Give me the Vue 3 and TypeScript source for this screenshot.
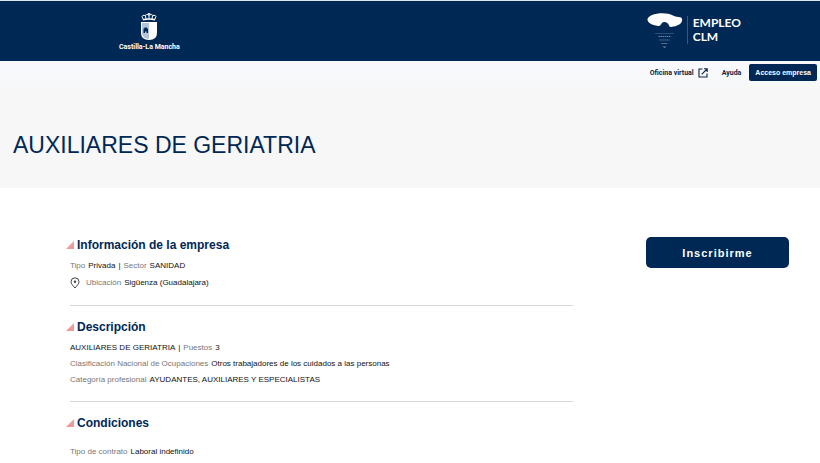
<script setup lang="ts">
interface Field {
  label?: string
  value: string
  pin?: boolean
}

interface Section {
  title: string
  rows: Field[][]
  spaced?: boolean
}

const sections: Section[] = [
  {
    title: 'Información de la empresa',
    rows: [
      [{ label: 'Tipo', value: 'Privada' }, { label: 'Sector', value: 'SANIDAD' }],
      [{ label: 'Ubicación', value: 'Sigüenza (Guadalajara)', pin: true }],
    ],
  },
  {
    title: 'Descripción',
    rows: [
      [{ value: 'AUXILIARES DE GERIATRIA' }, { label: 'Puestos', value: '3' }],
      [{ label: 'Clasificación Nacional de Ocupaciones', value: 'Otros trabajadores de los cuidados a las personas' }],
      [{ label: 'Categoría profesional', value: 'AYUDANTES, AUXILIARES Y ESPECIALISTAS' }],
    ],
  },
  {
    title: 'Condiciones',
    spaced: true,
    rows: [[{ label: 'Tipo de contrato', value: 'Laboral indefinido' }]],
  },
]
</script>

<template>
  <div class="page">
    <header class="brand-bar">
      <a class="region" href="#">
        <svg class="crest" viewBox="0 0 18 29" aria-hidden="true">
          <g fill="none" stroke="#fff" stroke-width="1">
            <path d="M3.500 8 L2 4.500 Q2.500 2.600 5 3.500 Q6.500 1.800 9 3 Q11.500 1.800 13 3.500 Q15.500 2.600 16 4.500 L14.500 8" />
            <path d="M5.500 4 L6 7 M9 1 V7 M12.500 4 L12 7 M7.700 1.800 H10.300" />
            <path d="M3 7.700 Q9 6.200 15 7.700" stroke-width="1.400" />
          </g>
          <path d="M1 10 H17 V21 Q17 28 9 28 Q1 28 1 21 Z" fill="#fff" />
          <path d="M2 11 H9 V27 Q2 26.500 2 21 Z" fill="#b4c3d6" />
          <path d="M3.500 21 V16.500 H4.500 V15.500 H7 V16.500 H8 V21 H6.500 V19.500 H5 V21 Z" fill="#002855" />
        </svg>
        <span class="region-name">Castilla-La Mancha</span>
      </a>
      <a class="empleo" href="#">
        <svg class="empleo-mark" viewBox="0 0 36 38" aria-hidden="true">
          <path d="M5 3 C11 .5 21 .5 26 3.500 C28 5 31 4.500 34 5.500 C36.500 7.500 35 12 30 13.500 C26 15.200 23 15.200 22.500 14.500 C21.500 11 19 9.800 17 10 C14 10.500 14 14 12 14 C6 13.500 0 11 .5 7 C1 5 3 4 5 3 Z" fill="#fff" />
          <g stroke="#6f86a3" fill="none">
            <path d="M8 21.500 H27" stroke-width=".4" />
            <path d="M11.500 24.500 H23.500" stroke-dasharray="1.500 .6" stroke-width="1.200" />
            <path d="M12.500 28 H22.500" stroke-dasharray="1.200 .7" stroke-width="1.200" />
            <path d="M14.500 31.500 H20.500" stroke-dasharray="1.400 .5" stroke-width="1.200" />
            <path d="M16.500 34 L17.500 36 L18.500 34" stroke-width=".9" />
          </g>
        </svg>
        <span class="empleo-name">
          <span>EMPLEO</span>
          <span>CLM</span>
        </span>
      </a>
    </header>

    <div class="hero">
      <nav class="links">
        <a class="link" href="#">
          Oficina virtual
          <svg class="external" viewBox="0 0 10 10" aria-hidden="true">
            <path d="M4.500 1 H1 V9 H9 V5.500 M6 .8 H9.200 V4 M9 1 L3.700 6.300" fill="none" stroke="#0b2545" stroke-width="1.100" />
          </svg>
        </a>
        <a class="link" href="#">Ayuda</a>
        <button class="access" type="button">Acceso empresa</button>
      </nav>
      <h1 class="title">AUXILIARES DE GERIATRIA</h1>
    </div>

    <main class="body">
      <div class="details">
        <section v-for="section in sections" :key="section.title" class="section" :class="{ spaced: section.spaced }">
          <h2 class="heading">
            <svg class="corner" viewBox="0 0 8 8" aria-hidden="true"><path d="M8 0 V8 H0 Z" fill="#f19a9c" /></svg>
            {{ section.title }}
          </h2>
          <p v-for="(row, r) in section.rows" :key="r" class="row">
            <template v-for="(field, f) in row" :key="f">
              <span v-if="f > 0" class="value">|</span>
              <svg v-if="field.pin" class="pin" viewBox="0 0 10 12" aria-hidden="true">
                <path d="M5 11 C3 8.500 1 7 1 4.800 A4 4 0 0 1 9 4.800 C9 7 7 8.500 5 11 Z" fill="none" stroke="#444" stroke-width="1" />
                <circle cx="5" cy="4.700" r="1.200" fill="#444" />
              </svg>
              <span v-if="field.label" class="label">{{ field.label }}</span>
              <span class="value">{{ field.value }}</span>
            </template>
          </p>
        </section>
      </div>
      <aside class="actions">
        <button class="enroll" type="button">Inscribirme</button>
      </aside>
    </main>
  </div>
</template>

<style>
body {
  margin: 0;
  background: #fff;
}
</style>

<style scoped>
.page {
  font-family: "Liberation Sans", Arial, sans-serif;
  font-size: 8px;
  color: #111;
  overflow: hidden;
}

a {
  color: inherit;
  text-decoration: none;
}

button {
  border: 0;
  color: #fff;
  background: #002855;
  font-family: inherit;
  font-weight: 700;
  cursor: pointer;
}

.brand-bar {
  display: flex;
  justify-content: space-between;
  align-items: flex-start;
  padding: 11px 79px 9px 119px;
  border-top: 1px solid #dfe5ee;
  color: #fff;
  background: #002855;
}

.region {
  display: flex;
  flex-direction: column;
  align-items: center;
  gap: 1px;
}

.crest {
  width: 18px;
  height: 29px;
}

.region-name {
  font-family: Roboto, sans-serif;
  font-size: 7px;
  line-height: 10px;
  font-weight: 700;
  white-space: nowrap;
}

.empleo {
  display: flex;
  align-items: flex-start;
}

.empleo-mark {
  width: 36px;
  height: 38px;
}

.empleo-name {
  display: flex;
  flex-direction: column;
  margin: 4px 0 0 4px;
  padding-left: 5px;
  border-left: 1px solid #3c5878;
  font-family: Lato, sans-serif;
  font-size: 12px;
  line-height: 14px;
  font-weight: 700;
}

.hero {
  padding-bottom: 27px;
  background: linear-gradient(#f8fafe, #f7f7f7 32px);
}

.links {
  display: flex;
  justify-content: flex-end;
  align-items: center;
  gap: 14px;
  padding: 3px 3px 0 0;
  color: #0b2545;
  font-family: Roboto, sans-serif;
  font-size: 7px;
  font-weight: 700;
}

.link {
  display: flex;
  align-items: center;
  gap: 4px;
}

.external {
  width: 10px;
  height: 10px;
}

.access {
  height: 17px;
  margin-left: -6px;
  padding: 0 6px;
  border-radius: 2px;
  font-family: "Liberation Sans", Arial, sans-serif;
  font-size: 7px;
}

.title {
  margin: 0;
  padding: 48px 13px 0;
  color: #002855;
  font-size: 23px;
  line-height: 32px;
  font-weight: 400;
}

.body {
  display: flex;
  justify-content: space-between;
  padding: 48px 31px 0 70px;
}

.details {
  flex: 0 1 503px;
}

.section {
  padding-bottom: 13px;
  margin-bottom: 12px;
  border-bottom: 1px solid #d8d8d8;
}

.section:last-child {
  border-bottom: 0;
  margin-bottom: 0;
  padding-bottom: 0;
}

.heading {
  display: flex;
  align-items: center;
  gap: 3px;
  margin: 0 0 4px -4px;
  color: #002855;
  font-size: 12px;
  line-height: 18px;
}

.spaced .heading {
  margin-bottom: 12px;
}

.corner {
  width: 8px;
  height: 8px;
}

.row {
  display: flex;
  align-items: center;
  gap: 3px;
  margin: 0;
  line-height: 16px;
}

.row:has(.pin) {
  line-height: 18px;
}

.label {
  color: #777;
}

.pin {
  width: 10px;
  height: 12px;
  margin-right: 3px;
}

.actions {
  padding-top: 1px;
}

.enroll {
  width: 143px;
  height: 31px;
  border-radius: 5px;
  font-size: 11px;
  letter-spacing: 1px;
}
</style>
